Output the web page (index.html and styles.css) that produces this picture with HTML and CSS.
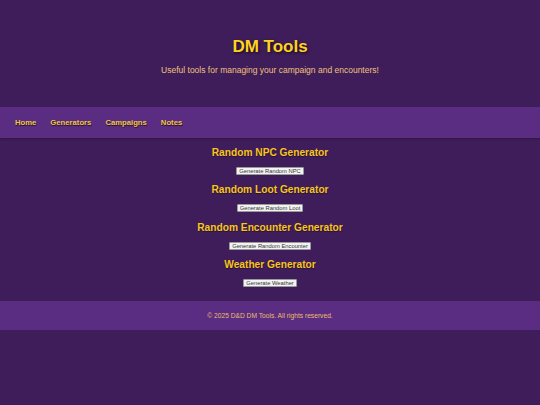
FILE: index.html
```html
<!DOCTYPE html>
<html lang="en">
<head>
<meta charset="utf-8">
<title>DM Tools</title>
<link rel="stylesheet" href="styles.css">
</head>
<body>
<header class="site-header">
  <h1 class="title">DM Tools</h1>
  <p class="tagline">Useful tools for managing your campaign and encounters!</p>
</header>
<nav class="site-nav">
  <a href="#" class="nav-link">Home</a>
  <a href="#" class="nav-link">Generators</a>
  <a href="#" class="nav-link">Campaigns</a>
  <a href="#" class="nav-link">Notes</a>
</nav>
<main class="tools">
  <section class="tool">
    <h2 class="tool-title">Random NPC Generator</h2>
    <button class="tool-btn">Generate Random NPC</button>
  </section>
  <section class="tool">
    <h2 class="tool-title">Random Loot Generator</h2>
    <button class="tool-btn">Generate Random Loot</button>
  </section>
  <section class="tool">
    <h2 class="tool-title">Random Encounter Generator</h2>
    <button class="tool-btn">Generate Random Encounter</button>
  </section>
  <section class="tool">
    <h2 class="tool-title">Weather Generator</h2>
    <button class="tool-btn">Generate Weather</button>
  </section>
</main>
<footer class="site-footer">
  <p class="copy">© 2025 D&amp;D DM Tools. All rights reserved.</p>
</footer>
</body>
</html>
```
FILE: styles.css
```css
html, body {
  margin: 0;
  padding: 0;
}
body {
  background: #3f1d5a;
  font-family: "Liberation Sans", Arial, sans-serif;
  min-height: 405px;
}
.site-header {
  height: 107px;
  display: flex;
  flex-direction: column;
  align-items: center;
  justify-content: center;
  box-sizing: border-box;
  padding-top: 4.5px;
}
.title {
  margin: 0;
  font-size: 17px;
  line-height: 20px;
  color: #ffd21f;
  text-shadow: 1px 1px 3px rgba(0,0,0,0.7);
}
.tagline {
  margin: 8.5px 0 0;
  font-size: 8.5px;
  line-height: 10px;
  color: #efc27a;
}
.site-nav {
  height: 31px;
  background: #5a2d82;
  display: flex;
  align-items: center;
  gap: 14px;
  padding: 0 15px;
  box-shadow: 0 1px 2px rgba(0,0,0,0.25);
}
.nav-link {
  color: #f4c54a;
  font-weight: bold;
  font-size: 7.7px;
  text-decoration: none;
  text-shadow: 0.5px 0.5px 1px rgba(0,0,0,0.7);
}
.tools {
  display: flex;
  flex-direction: column;
  align-items: center;
  padding: 9px 0 4px;
}
.tool {
  display: flex;
  flex-direction: column;
  align-items: center;
  height: 37.4px;
}
.tool-title {
  margin: 0;
  font-size: 10.2px;
  line-height: 12px;
  color: #f7c51e;
  text-shadow: 0.5px 0.5px 1px rgba(0,0,0,0.4);
}
.tool-btn {
  margin-top: 8px;
  font-family: "Liberation Sans", Arial, sans-serif;
  font-size: 5.8px;
  line-height: 6px;
  padding: 0 2px;
  background: #f3f3f3;
  color: #333;
  border: 1px solid #9a9a9a;
  border-radius: 1px;
}
.site-footer {
  height: 29px;
  background: #5a2d82;
  display: flex;
  align-items: center;
  justify-content: center;
}
.copy {
  margin: 0;
  font-size: 6.67px;
  color: #e9bf6a;
}
```
